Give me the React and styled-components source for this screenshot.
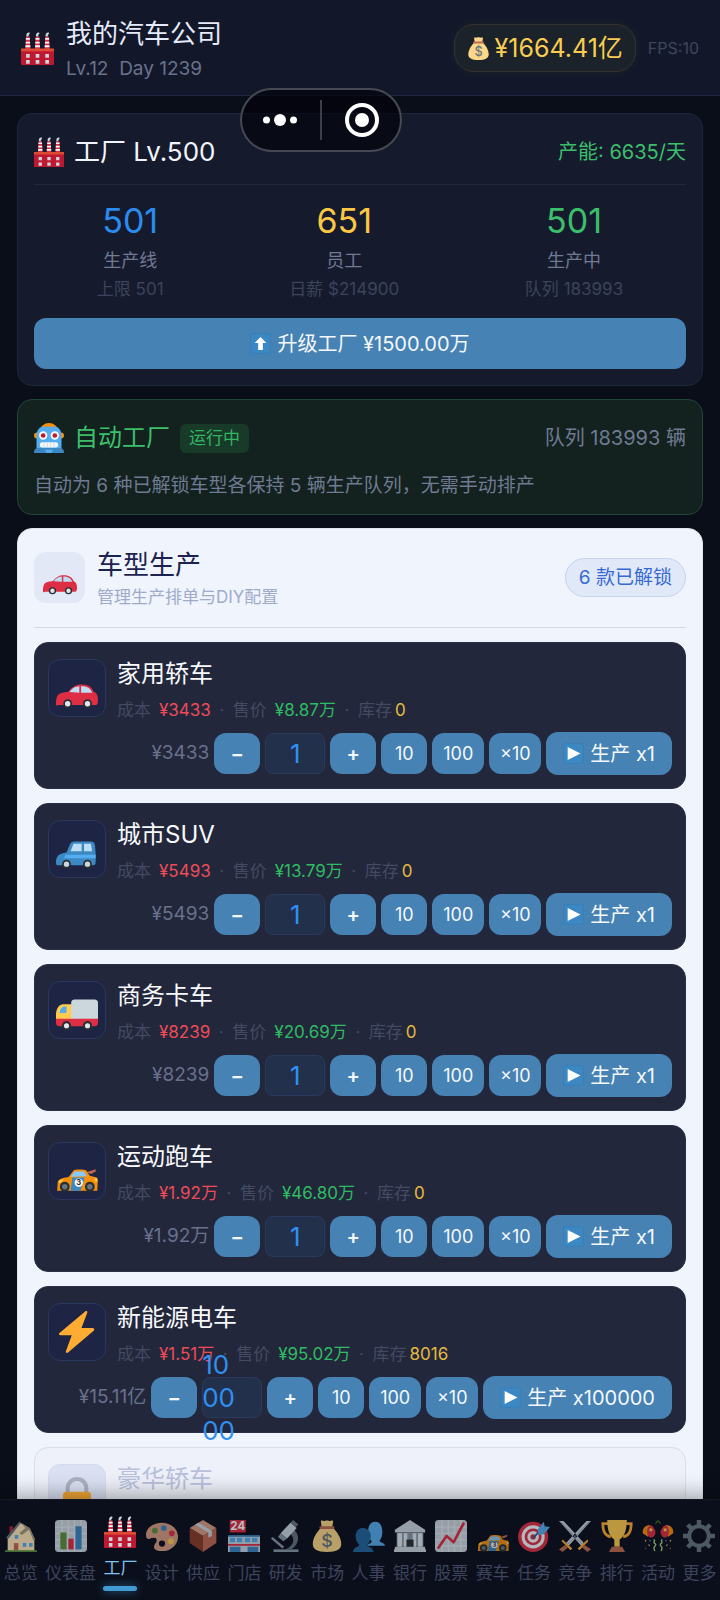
import React, { useState } from "react";
import styled, { createGlobalStyle, css } from "styled-components";

const GlobalStyle = createGlobalStyle`
  * {
    box-sizing: border-box;
  }
  body {
    margin: 0;
    background: #0a0e19;
    font-family: Inter, "Noto Sans CJK SC", sans-serif;
    font-weight: 400;
    line-height: 1.4;
  }
  h1, h2, h3, p {
    margin: 0;
    font-weight: 400;
  }
  button, input, textarea {
    font-family: inherit;
    line-height: inherit;
    margin: 0;
  }
`;

/* ---------- icons ---------- */

const stack = (x) => (
  <g key={x}>
    <path d={`M${x - 2} 5h4l.8 14h-5.6z`} fill="#dd2e44" />
    <path d={`M${x - 2.1} 6.5h4.2l.1 2h-4.4zM${x - 2.3} 10.5h4.6l.1 2h-4.8zM${x - 2.6} 14.5h5.2l.1 2h-5.4z`} fill="#f5f8fa" />
    <path d={`M${x - 1.5} 5c-.6-2 .2-4 2.2-4.4 1.2-.2 1.6.6 1.3 1.400-.4 1-1.500 1-1.300 3z`} fill="#ccd6dd" />
  </g>
);

const racer = (
  <g>
    <path d="M26 19l8-2.500v2l-4 2z" fill="#c1694f" />
    <path d="M1 35l.5-7.500C3 24 8 24 11 23l4-5.500c1-1 9-1 11 0l3 4.500 6 1.500.8 3-.4 8.500z" fill="#f4900c" />
    <path d="M12.500 23l3.500-4.500h8l2.500 4z" fill="#88c9f9" />
    <path d="M14 23.500h10.500L21 35h-8.500z" fill="#3b88c3" />
    <path d="M2 26.500l3.500-1.500 1 1-3.500 2.500zM33 24l2.500.5v2.500h-2z" fill="#ffcc4d" />
    <circle cx="7.500" cy="31.500" r="4.200" fill="#292f33" />
    <circle cx="7.500" cy="31.500" r="2.300" fill="#66757f" />
    <circle cx="29" cy="31.500" r="4.200" fill="#292f33" />
    <circle cx="29" cy="31.500" r="2.300" fill="#66757f" />
    <circle cx="19.500" cy="28" r="3.600" fill="#f5f8fa" />
    <text x="19.500" y="30.400" fontSize="6.500" fontWeight="700" textAnchor="middle" fill="#292f33">3</text>
  </g>
);

const popper = (
  <g>
    <path d="M1 15C0 8 7 4 12 7l3 5c1 4-2 8-5 8L1 15z" fill="#dd2e44" />
    <path d="M1 15c-1-6 4-10 9-9-5 2-5 8-3 13z" fill="#f4900c" />
    <path d="M9 9l3 1-1 3-3-1z" fill="#ffcc4d" />
    <path d="M13 22c3 1-1 3 1 4s2 2 0 4 1 3 0 5" fill="none" stroke="#a6d388" strokeWidth="1.500" />
    <path d="M3 22l2 1-1 2zM7 27l2 1-1 2zM4 31l1 1-1 1z" fill="#ffcc4d" />
    <path d="M8 22l2 1-1 2z" fill="#9266cc" />
  </g>
);

const drawings = {
  factory: (
    <g>
      {[7.5, 18, 28.5].map(stack)}
      <path d="M0 19h36v16a1 1 0 0 1-1 1H1a1 1 0 0 1-1-1z" fill="#be1931" />
      <path d="M0 18h36v3H0z" fill="#dd4b35" />
      <path d="M5.500 24h4v4h-4zM16 24h4v4h-4zM26.500 24h4v4h-4zM5.500 30.500h4v4h-4zM16 30.500h4v4h-4zM26.500 30.500h4v4h-4z" fill="#ccd6dd" />
    </g>
  ),
  moneybag: (
    <g>
      <path d="M12 8C6 14 2 21 2 27c0 6 5 9 16 9s16-3 16-9c0-6-4-13-10-19z" fill="#fdd888" />
      <path d="M11 1c2-1 3 .5 5-.2 1.500-.5 2.500-.5 4 0 2 .7 3-.8 5 .2L24 8H12z" fill="#fdd888" />
      <path d="M11 7h14a1 1 0 0 1 0 3H11a1 1 0 0 1 0-3z" fill="#bf6952" />
      <text x="18" y="30" fontSize="20" fontWeight="500" textAnchor="middle" fill="#67757f">$</text>
    </g>
  ),
  robot: (
    <g>
      <path d="M11 3c2-4 12-4 14 0z" fill="#f4900c" />
      <circle cx="3.500" cy="15" r="3.500" fill="#f4900c" />
      <circle cx="32.500" cy="15" r="3.500" fill="#f4900c" />
      <path d="M3 31V15C3 7 9 2 18 2s15 5 15 13v16z" fill="#55acee" />
      <path d="M10 3c2-2.500 14-2.500 16 0l1 1.500H9z" fill="#f4900c" />
      <path d="M0 35c0-3 2-5 5-5h26c3 0 5 2 5 5a1 1 0 0 1-1 1H1a1 1 0 0 1-1-1z" fill="#3b88c3" />
      <path d="M13 32h10l-2 4h-6z" fill="#55acee" />
      <circle cx="11" cy="15" r="5" fill="#f5f8fa" />
      <circle cx="25" cy="15" r="5" fill="#f5f8fa" />
      <circle cx="11" cy="15" r="2.800" fill="#be1931" />
      <circle cx="25" cy="15" r="2.800" fill="#be1931" />
      <rect x="7" y="23" width="22" height="6.500" rx="3" fill="#f5f8fa" />
      <path d="M12 23v6.500M16 23v6.500M20 23v6.500M24 23v6.500" stroke="#ccd6dd" strokeWidth="1" />
    </g>
  ),
  car: (
    <g>
      <path d="M0 32c0-5 .5-8 4-9.500 2-.8 5-1 6.500-1.300C14 17 17 15 22 15c6 0 9 2.500 10.500 6.500C35 22 36 25 36 28c0 3-.5 4.500-2 4.500H2C.5 33.500 0 33 0 32z" fill="#dd2e44" />
      <path d="M11.500 21.500c2.500-3.500 5-4.800 8.500-5v5.500zM21.500 16.500c5 0 8 1.500 9.500 5.500h-9.500z" fill="#bdddf4" />
      <circle cx="10" cy="31.500" r="3.800" fill="#292f33" />
      <circle cx="10" cy="31.500" r="2.300" fill="#e1e8ed" />
      <circle cx="27" cy="31.500" r="3.800" fill="#292f33" />
      <circle cx="27" cy="31.500" r="2.300" fill="#e1e8ed" />
    </g>
  ),
  suv: (
    <g>
      <path d="M0 30c0-6 2-8 9-9l3-7c1-2 2-2.500 4-2.500h14c2 0 3 1 3.400 3L34 22v7c0 2-.5 3-2 3H2c-1.500 0-2-.5-2-2z" fill="#3b88c3" />
      <path d="M15 13.500h7V20h-9.500zM24 13.500h6l1 6.500h-7z" fill="#bdddf4" />
      <path d="M8 23h26v3H7z" fill="#55acee" />
      <circle cx="9" cy="31" r="3.800" fill="#292f33" />
      <circle cx="9" cy="31" r="2.300" fill="#ccd6dd" />
      <circle cx="27" cy="31" r="3.800" fill="#292f33" />
      <circle cx="27" cy="31" r="2.300" fill="#ccd6dd" />
    </g>
  ),
  truck: (
    <g>
      <path d="M0 27v-6c.5-5 3-8 6-8h8v14z" fill="#ffcc4d" />
      <path d="M3 20.500c.6-3.500 2-5.500 4-5.500h2v5.500z" fill="#55acee" />
      <rect x="13" y="9" width="23" height="20" rx="3" fill="#ccd6dd" />
      <path d="M0 25.500h36V29c0 2-1 3-3 3H3c-2 0-3-1-3-3z" fill="#dd2e44" />
      <circle cx="9" cy="31.500" r="4" fill="#292f33" />
      <circle cx="9" cy="31.500" r="2.200" fill="#e1e8ed" />
      <circle cx="27" cy="31.500" r="4" fill="#292f33" />
      <circle cx="27" cy="31.500" r="2.200" fill="#e1e8ed" />
    </g>
  ),
  racecar: racer,
  bolt: (
    <path d="M31.500 14.500H21.800L26.800 1.500c.4-1.200-.8-2-1.800-1.100L3 18.800c-.9.900-.5 2 .8 2h9.700L8.500 34.500c-.4 1.200.8 2 1.800 1.100l22-18.600c.9-.9.500-2.500-.8-2.500z" fill="#ffac33" />
  ),
  lock: (
    <g>
      <path d="M10 20v-6c0-4.500 3.500-8 8-8s8 3.500 8 8v6" fill="none" stroke="#aab2c0" strokeWidth="3.500" />
      <rect x="6" y="17" width="24" height="19" rx="3" fill="#f2a636" />
    </g>
  ),
  up: (
    <g>
      <rect x="1" y="1" width="34" height="34" rx="3" fill="#3b88c3" stroke="#3a7fb8" strokeWidth="2" />
      <path d="M18 7l10 10h-6v12h-8V17H8z" fill="#fff" />
    </g>
  ),
  play: (
    <g>
      <rect x="1" y="1" width="34" height="34" rx="3" fill="#3b88c3" stroke="#3a7fb8" strokeWidth="2" />
      <path d="M8 7l22 11L8 29z" fill="#fff" />
    </g>
  ),
  house: (
    <g>
      <path d="M5 7h4v8H5z" fill="#be1931" />
      <path d="M3 19L17 3l11 7 5 12v13H3z" fill="#ffe8b6" />
      <path d="M1 20L16 2l2 1L4 21z" fill="#66757f" />
      <path d="M18 3l10 6 6 13-2 1-5-12-8 6-3-2 7-6z" fill="#a39a80" />
      <path d="M10 26h5v8h-5z" fill="#c1694f" />
      <path d="M20 26h4v4h-4zM27 26h4v4h-4zM11 17h4v4h-4z" fill="#55acee" />
      <path d="M0 34h36v2H0z" fill="#5c913b" />
    </g>
  ),
  bars: (
    <g>
      <rect width="36" height="36" rx="4" fill="#ccd6dd" />
      <path d="M0 8h36M0 15h36M0 22h36M0 29h36M8 0v36M15 0v36M22 0v36M29 0v36" stroke="#e1e8ed" strokeWidth="1.500" />
      <path d="M6 14h7v19H6z" fill="#5c913b" />
      <path d="M15 21h6v12h-6z" fill="#dd2e44" />
      <path d="M23 7h7v26h-7z" fill="#3b88c3" />
    </g>
  ),
  palette: (
    <g>
      <path d="M18 3C8 3 0 9 0 17c0 3 1 5 4 4 4-1 8-2 8 2 0 3-3 4-3 7 0 4 5 5 9 5 10 0 18-7 18-16S28 3 18 3zm0 27a3.500 3.500 0 1 1 0-7 3.500 3.500 0 0 1 0 7z" fill="#d99e82" />
      <circle cx="10" cy="12" r="3.200" fill="#5c913b" />
      <circle cx="20" cy="9" r="3.200" fill="#3b88c3" />
      <circle cx="29" cy="15" r="3.200" fill="#dd2e44" />
      <circle cx="28" cy="24" r="3.200" fill="#ffcc4d" />
    </g>
  ),
  box: (
    <g>
      <path d="M18 0l15 9-15 9L3 9z" fill="#d99e82" />
      <path d="M3 9l15 9v18L3 26z" fill="#8a3f28" />
      <path d="M33 9l-15 9v18l15-10z" fill="#c1694f" />
      <path d="M9 5l4-2 15 9v6l-4 2v-6z" fill="#ccd6dd" />
    </g>
  ),
  store: (
    <g>
      <rect x="2" y="0" width="18" height="14" fill="#dd2e44" />
      <text x="11" y="11.500" fontSize="13" fontWeight="700" textAnchor="middle" fill="#fff">24</text>
      <path d="M0 18h36v18H0z" fill="#ccd6dd" />
      <path d="M0 17h36v2H0z" fill="#3b88c3" />
      <path d="M2 20h6v5H2zM10 20h6v5h-6zM19 20h6v5h-6zM27 20h6v5h-6z" fill="#55acee" />
      <path d="M0 27h36v2H0z" fill="#dd2e44" />
      <path d="M2 30h12v6H2zM22 30h12v6H22z" fill="#3b88c3" />
    </g>
  ),
  microscope: (
    <g>
      <path d="M4 33h28v3H4z" fill="#8899a6" />
      <path d="M27 11c7 6 6 16-3 22h-6c8-4 11-10 5-18z" fill="#66757f" />
      <path d="M26 0l6 5-3 3-6-5z" fill="#66757f" />
      <path d="M23 3l7 6-11 12-7-6z" fill="#ccd6dd" />
      <path d="M12 15l7 6-4 3-6-5z" fill="#8899a6" />
      <path d="M3 19l13 11-2 2L1 21z" fill="#8899a6" />
    </g>
  ),
  people: (
    <g>
      <path d="M16 29c1-3 5-2 5-5-3-3-4-6-4-11 0-7 3-11 8-11s8 4 8 11c0 5-1 8-3 10 0 3 6 2 6 6z" fill="#55acee" />
      <path d="M0 36c0-6 6-5 7-8-3-3-4-6-4-10 0-6 4-9 8-9s9 3 9 9c0 4-1 7-4 10 1 3 7 2 7 8z" fill="#226699" />
    </g>
  ),
  bank: (
    <g>
      <path d="M18 0l17 11v3H1v-3z" fill="#ccd6dd" />
      <path d="M3 14h30v16H3z" fill="#8899a6" />
      <path d="M4 15h5v15H4zM11 15h4v15h-4zM21 15h4v15h-4zM27 15h5v15h-5z" fill="#e1e8ed" />
      <path d="M14 22h8v9h-8z" fill="#292f33" />
      <path d="M1 30h34v3H1zM0 33h36v3H0z" fill="#ccd6dd" />
    </g>
  ),
  stocks: (
    <g>
      <rect width="36" height="36" rx="4" fill="#ccd6dd" />
      <path d="M0 8h36M0 15h36M0 22h36M0 29h36M8 0v36M15 0v36M22 0v36M29 0v36" stroke="#e1e8ed" strokeWidth="1.500" />
      <path d="M4 31l9-13 8 7L32 4" fill="none" stroke="#dd2e44" strokeWidth="3" strokeLinejoin="round" strokeLinecap="round" />
    </g>
  ),
  target: (
    <g>
      <circle cx="17" cy="19" r="17" fill="#dd2e44" />
      <circle cx="17" cy="19" r="13" fill="#f5f8fa" />
      <circle cx="17" cy="19" r="9.500" fill="#dd2e44" />
      <circle cx="17" cy="19" r="6.500" fill="#f5f8fa" />
      <circle cx="17" cy="19" r="3" fill="#dd2e44" />
      <path d="M17 20L29 8" stroke="#226699" strokeWidth="2" />
      <path d="M22 11l7-9 1 5 6 1-7 8-6 1z" fill="#55acee" />
    </g>
  ),
  swords: (
    <g>
      <path d="M0 1l5 0 23 25-3 3zM36 1l-5 0L8 26l3 3z" fill="#ccd6dd" />
      <path d="M2 2l25 26M34 2L9 28" stroke="#8899a6" strokeWidth="1" />
      <path d="M4 22l11 10-2 2L3 24zM32 22L21 32l2 2 10-10z" fill="#ffac33" />
      <path d="M7 28l3 3-6 5-4-3zM29 28l-3 3 6 5 4-3z" fill="#c1694f" />
    </g>
  ),
  trophy: (
    <g>
      <path d="M8 4H2c0 8 2 14 9 15M28 4h6c0 8-2 14-9 15" fill="none" stroke="#ffac33" strokeWidth="3" />
      <path d="M7 0h22c0 12-3 19-8 22v8h-6v-8C10 19 7 12 7 0z" fill="#ffcc4d" />
      <path d="M12 30h12l3 6H9z" fill="#c1694f" />
    </g>
  ),
  party: (
    <g>
      {popper}
      <g transform="translate(36 0) scale(-1 1)">{popper}</g>
      <path d="M15 4l3-3 3 3" fill="none" stroke="#3e721d" strokeWidth="1.500" />
    </g>
  ),
  gear: (
    <g fill="none" stroke="#66757f">
      <circle cx="18" cy="18" r="11" strokeWidth="4.500" />
      <path d="M18 0v6M18 30v6M0 18h6M30 18h6M5.300 5.300l4.200 4.200M26.500 26.500l4.200 4.200M5.300 30.700l4.200-4.200M26.500 9.500l4.200-4.200" strokeWidth="5" />
    </g>
  ),
};

const Svg = styled.svg`
  display: block;
  flex: none;
  width: ${(p) => p.$size}px;
  height: ${(p) => p.$size}px;
`;

const Icon = ({ name, size }) => (
  <Svg $size={size} viewBox="0 0 36 36" aria-hidden="true">
    {drawings[name]}
  </Svg>
);

/* ---------- page ---------- */

const Page = styled.div`
  display: flex;
  flex-direction: column;
  height: 100vh;
  overflow: hidden;
  position: relative;
`;

const Header = styled.header`
  display: flex;
  align-items: center;
  gap: 12px;
  padding: 17px 21px 16px;
  background: #12182a;
  border-bottom: 1px solid #1f2740;
`;

const Company = styled.div`
  flex: 1;
  display: flex;
  flex-direction: column;
  gap: 8px;
`;

const CompanyName = styled.h1`
  font-size: 26px;
  line-height: 34px;
  color: #e6ebfb;
`;

const CompanyMeta = styled.p`
  font-size: 19px;
  line-height: 20px;
  color: #6a728a;
  white-space: pre;
`;

const Money = styled.div`
  display: flex;
  align-items: center;
  gap: 5px;
  height: 48px;
  padding: 0 12px;
  border: 1px solid #33342f;
  border-radius: 20px;
  background: #1c2229;
  box-shadow: 0 0 12px rgba(255, 205, 80, 0.06);
  color: #f8cd52;
  font-size: 25px;
`;

const Fps = styled.span`
  font-size: 16px;
  color: #3e465e;
`;

const Capsule = styled.div`
  position: absolute;
  z-index: 5;
  top: 88px;
  left: 240px;
  display: flex;
  align-items: center;
  height: 64px;
  border: 2px solid #464953;
  border-radius: 32px;
  background: rgba(0, 0, 6, 0.6);
`;

const CapsuleButton = styled.button`
  display: flex;
  align-items: center;
  justify-content: center;
  width: 79px;
  height: 100%;
  padding: 0 4px 0 0;
  border: 0;
  background: none;
  & + & {
    position: relative;
    padding: 0 0 0 3px;
  }
  & + &::before {
    content: "";
    position: absolute;
    left: -1px;
    top: 10px;
    bottom: 10px;
    width: 2px;
    background: #3d3f48;
  }
`;

const Main = styled.main`
  flex: 1;
  min-height: 0;
  overflow-y: auto;
  scrollbar-width: none;
  display: flex;
  flex-direction: column;
  gap: 13px;
  padding: 17px;
  & > * {
    flex: none;
  }
`;

const Card = styled.section`
  padding: 16px;
  border: 1px solid #1f273c;
  border-radius: 15px;
  background: #151b2d;
`;

const AutoCard = styled(Card)`
  border-color: #20463a;
  background: #13211f;
`;

const ModelCard = styled(Card)`
  border-color: #dfe5f2;
  background: #f0f4fd;
`;

const CardHead = styled.div`
  display: flex;
  align-items: center;
  gap: 10px;
  height: 44px;
`;

const FactoryHead = styled(CardHead)`
  height: 55px;
  padding-bottom: 10px;
  border-bottom: 1px solid #212738;
`;

const CardTitle = styled.h2`
  font-size: ${(p) => p.$size || 24}px;
  color: ${(p) => p.$color || "#f1f4fd"};
`;

const HeadNote = styled.span`
  margin-left: auto;
  font-size: 20px;
  color: ${(p) => p.$color};
`;

const Stats = styled.div`
  display: flex;
  justify-content: space-around;
  margin: 16px 0 15px;
  text-align: center;
`;

const StatValue = styled.p`
  font-size: 34px;
  line-height: 40px;
  margin-bottom: 6px;
  color: ${(p) => p.$color};
`;

const StatLabel = styled.p`
  font-size: 18px;
  line-height: 28px;
  color: #717993;
`;

const StatHint = styled.p`
  font-size: 17px;
  line-height: 28px;
  color: #3c435a;
`;

const BlueButton = styled.button`
  display: flex;
  align-items: center;
  justify-content: center;
  padding: 0;
  border: 0;
  border-radius: 12px;
  background: #4682b4;
  color: #f4f8fd;
`;

const UpgradeButton = styled(BlueButton)`
  width: 100%;
  height: 51px;
  gap: 6px;
  font-size: 20px;
`;

const Running = styled.span`
  padding: 0 9px;
  border-radius: 6px;
  background: #183a28;
  color: #32b565;
  font-size: 17px;
  line-height: 29px;
`;

const AutoText = styled.p`
  margin-top: 14px;
  font-size: 19px;
  line-height: 24px;
  color: #6f7b92;
`;

const ModelHead = styled.div`
  display: flex;
  align-items: center;
  gap: 12px;
  padding-bottom: 17px;
  border-bottom: 1px solid #d2d8e6;
  margin-bottom: 14px;
  height: 83px;
`;

const ModelBadge = styled.div`
  display: grid;
  place-items: center;
  width: 51px;
  height: 51px;
  border-radius: 12px;
  background: #e2e8f6;
`;

const ModelTitle = styled.h2`
  font-size: 26px;
  line-height: 36px;
  color: #1d2350;
`;

const ModelSub = styled.p`
  margin-top: 2px;
  font-size: 17px;
  line-height: 24px;
  color: #a0abc9;
`;

const Unlocked = styled.span`
  margin-left: auto;
  padding: 0 13px;
  border: 1px solid #c5d3ee;
  border-radius: 20px;
  background: #e1e9f9;
  color: #3769d4;
  font-size: 19px;
  line-height: 37px;
`;

const List = styled.div`
  display: flex;
  flex-direction: column;
  gap: 14px;
`;

const Item = styled.article`
  padding: 16px 13px 13px;
  border: 1px solid ${(p) => (p.$locked ? "#d9deea" : "#2a3046")};
  border-radius: 14px;
  background: ${(p) => (p.$locked ? "#eef1f9" : "#22273b")};
`;

const ItemHead = styled.div`
  display: flex;
  gap: 11px;
`;

const ItemIcon = styled.div`
  display: grid;
  place-items: center;
  width: 58px;
  height: 58px;
  border: 1px solid ${(p) => (p.$locked ? "#d5dbee" : "#2b375d")};
  border-radius: 12px;
  background: ${(p) => (p.$locked ? "#dbe1f3" : "#1e2544")};
`;

const ItemName = styled.h3`
  font-size: 24px;
  line-height: 30px;
  color: ${(p) => (p.$locked ? "#b9c0dc" : "#f8f9fd")};
`;

const ItemMeta = styled.p`
  display: flex;
  align-items: center;
  margin-top: 8px;
  font-size: 17px;
  line-height: 26px;
  color: #434a62;
`;

const Value = styled.span`
  margin-left: ${(p) => p.$gap || 8}px;
  color: ${(p) => p.$color};
`;

const Dot = styled.span`
  width: 22px;
  text-align: center;
`;

const Controls = styled.div`
  display: flex;
  align-items: center;
  justify-content: flex-end;
  gap: 5px;
  margin-top: 9px;
`;

const Price = styled.span`
  font-size: 19px;
  color: #69718b;
`;

const StepButton = styled(BlueButton)`
  width: ${(p) => p.$width || 46}px;
  height: 41px;
  font-size: ${(p) => (p.$sign ? 20 : 18)}px;
  font-weight: ${(p) => (p.$sign ? 600 : 400)};
`;

const MakeButton = styled(BlueButton)`
  height: 43px;
  padding: 0 17px;
  gap: 6px;
  font-size: 20px;
`;

const QtyBox = styled.div`
  position: relative;
  width: 60px;
  height: 41px;
  border: 1px solid #293a5c;
  border-radius: 8px;
  background: #22304b;
`;

const fieldText = css`
  border: 0;
  outline: 0;
  background: none;
  color: #3090f2;
  font-size: 26px;
`;

const QtyInput = styled.input`
  ${fieldText}
  width: 100%;
  height: 100%;
  padding: 0;
  text-align: center;
`;

/* long amounts break into lines of two digits and spill over the box */
const QtyWrapped = styled.textarea`
  ${fieldText}
  position: absolute;
  z-index: 1;
  top: -30px;
  left: -1px;
  width: 42px;
  height: 99px;
  padding: 0;
  line-height: 33px;
  overflow: hidden;
  resize: none;
  word-break: break-all;
`;

const Nav = styled.nav`
  position: relative;
  z-index: 2;
  display: flex;
  height: 101px;
  border-top: 1px solid #141928;
  background: #0b0f1b;
  box-shadow: 0 -4px 20px rgba(0, 0, 0, 0.35);
`;

const NavLink = styled.a`
  flex: 1 1 auto;
  display: flex;
  flex-direction: column;
  align-items: center;
  gap: ${(p) => (p.$active ? 8 : 9)}px;
  padding-top: ${(p) => (p.$active ? 16 : 20)}px;
  color: ${(p) => (p.$active ? "#7cc4f2" : "#3d445b")};
  font-size: 17px;
  line-height: 24px;
  white-space: nowrap;
  text-decoration: none;
  svg {
    opacity: ${(p) => (p.$active ? 1 : 0.72)};
  }
  &::after {
    content: "";
    display: ${(p) => (p.$active ? "block" : "none")};
    width: 34px;
    height: 5px;
    margin-top: -2px;
    border-radius: 3px;
    background: #429bd3;
    box-shadow: 0 0 10px rgba(66, 155, 211, 0.6);
  }
`;

const stats = [
  { value: "501", label: "生产线", hint: "上限 501", color: "#2b8cf0" },
  { value: "651", label: "员工", hint: "日薪 $214900", color: "#fcc844" },
  { value: "501", label: "生产中", hint: "队列 183993", color: "#3cbf6b" },
];

const cars = [
  { icon: "car", name: "家用轿车", cost: "¥3433", sale: "¥8.87万", stock: 0, total: "¥3433", qty: "1" },
  { icon: "suv", name: "城市SUV", cost: "¥5493", sale: "¥13.79万", stock: 0, total: "¥5493", qty: "1" },
  { icon: "truck", name: "商务卡车", cost: "¥8239", sale: "¥20.69万", stock: 0, total: "¥8239", qty: "1" },
  { icon: "racecar", name: "运动跑车", cost: "¥1.92万", sale: "¥46.80万", stock: 0, total: "¥1.92万", qty: "1" },
  { icon: "bolt", name: "新能源电车", cost: "¥1.51万", sale: "¥95.02万", stock: 8016, total: "¥15.11亿", qty: "100000" },
];

const tabs = [
  ["house", "总览"],
  ["bars", "仪表盘"],
  ["factory", "工厂"],
  ["palette", "设计"],
  ["box", "供应"],
  ["store", "门店"],
  ["microscope", "研发"],
  ["moneybag", "市场"],
  ["people", "人事"],
  ["bank", "银行"],
  ["stocks", "股票"],
  ["racecar", "赛车"],
  ["target", "任务"],
  ["swords", "竞争"],
  ["trophy", "排行"],
  ["party", "活动"],
  ["gear", "更多"],
];

function CarItem({ car }) {
  const [qty, setQty] = useState(car.qty);
  const Field = qty.length > 3 ? QtyWrapped : QtyInput;
  const change = (n) => setQty(String(Math.max(1, n)));

  return (
    <Item>
      <ItemHead>
        <ItemIcon>
          <Icon name={car.icon} size={42} />
        </ItemIcon>
        <div>
          <ItemName>{car.name}</ItemName>
          <ItemMeta>
            成本<Value $color="#ee4b58">{car.cost}</Value>
            <Dot>·</Dot>
            售价<Value $color="#2fbb61">{car.sale}</Value>
            <Dot>·</Dot>
            库存<Value $gap={3} $color="#e6b93f">{car.stock}</Value>
          </ItemMeta>
        </div>
      </ItemHead>
      <Controls>
        <Price>{car.total}</Price>
        <StepButton $sign onClick={() => change(Number(qty) - 1)}>−</StepButton>
        <QtyBox>
          <Field aria-label={car.name} value={qty} onChange={(e) => setQty(e.target.value)} />
        </QtyBox>
        <StepButton $sign onClick={() => change(Number(qty) + 1)}>+</StepButton>
        <StepButton onClick={() => change(10)}>10</StepButton>
        <StepButton $width={52} onClick={() => change(100)}>100</StepButton>
        <StepButton $width={52} onClick={() => change(qty * 10)}>×10</StepButton>
        <MakeButton>
          <Icon name="play" size={21} />
          生产 x{qty}
        </MakeButton>
      </Controls>
    </Item>
  );
}

export default function App() {
  return (
    <Page>
      <GlobalStyle />
      <Header>
        <Icon name="factory" size={33} />
        <Company>
          <CompanyName>我的汽车公司</CompanyName>
          <CompanyMeta>{"Lv.12  Day 1239"}</CompanyMeta>
        </Company>
        <Money>
          <Icon name="moneybag" size={23} />
          ¥1664.41亿
        </Money>
        <Fps>FPS:10</Fps>
      </Header>

      <Capsule>
        <CapsuleButton aria-label="菜单">
          <svg width="36" height="14" viewBox="0 0 36 14" fill="#fff">
            <circle cx="4.500" cy="7" r="3.500" />
            <circle cx="18" cy="7" r="6" />
            <circle cx="31.500" cy="7" r="3.500" />
          </svg>
        </CapsuleButton>
        <CapsuleButton aria-label="关闭">
          <svg width="34" height="34" viewBox="0 0 34 34">
            <circle cx="17" cy="17" r="15" fill="none" stroke="#fff" strokeWidth="4" />
            <circle cx="17" cy="17" r="7" fill="#fff" />
          </svg>
        </CapsuleButton>
      </Capsule>

      <Main>
        <Card>
          <FactoryHead>
            <Icon name="factory" size={30} />
            <CardTitle $size={26}>工厂 Lv.500</CardTitle>
            <HeadNote $color="#3cbf6b">产能: 6635/天</HeadNote>
          </FactoryHead>
          <Stats>
            {stats.map((s) => (
              <div key={s.label}>
                <StatValue $color={s.color}>{s.value}</StatValue>
                <StatLabel>{s.label}</StatLabel>
                <StatHint>{s.hint}</StatHint>
              </div>
            ))}
          </Stats>
          <UpgradeButton>
            <Icon name="up" size={21} />
            升级工厂 ¥1500.00万
          </UpgradeButton>
        </Card>

        <AutoCard>
          <CardHead>
            <Icon name="robot" size={30} />
            <CardTitle $color="#3cbf6b">自动工厂</CardTitle>
            <Running>运行中</Running>
            <HeadNote $color="#6f7b92">队列 183993 辆</HeadNote>
          </CardHead>
          <AutoText>自动为 6 种已解锁车型各保持 5 辆生产队列，无需手动排产</AutoText>
        </AutoCard>

        <ModelCard>
          <ModelHead>
            <ModelBadge>
              <Icon name="car" size={34} />
            </ModelBadge>
            <div>
              <ModelTitle>车型生产</ModelTitle>
              <ModelSub>管理生产排单与DIY配置</ModelSub>
            </div>
            <Unlocked>6 款已解锁</Unlocked>
          </ModelHead>
          <List>
            {cars.map((car) => (
              <CarItem key={car.name} car={car} />
            ))}
            <Item $locked>
              <ItemHead>
                <ItemIcon $locked>
                  <Icon name="lock" size={42} />
                </ItemIcon>
                <ItemName $locked>豪华轿车</ItemName>
              </ItemHead>
            </Item>
          </List>
        </ModelCard>
      </Main>

      <Nav>
        {tabs.map(([icon, label]) => (
          <NavLink key={label} href="#" $active={label === "工厂"}>
            <Icon name={icon} size={32} />
            {label}
          </NavLink>
        ))}
      </Nav>
    </Page>
  );
}
